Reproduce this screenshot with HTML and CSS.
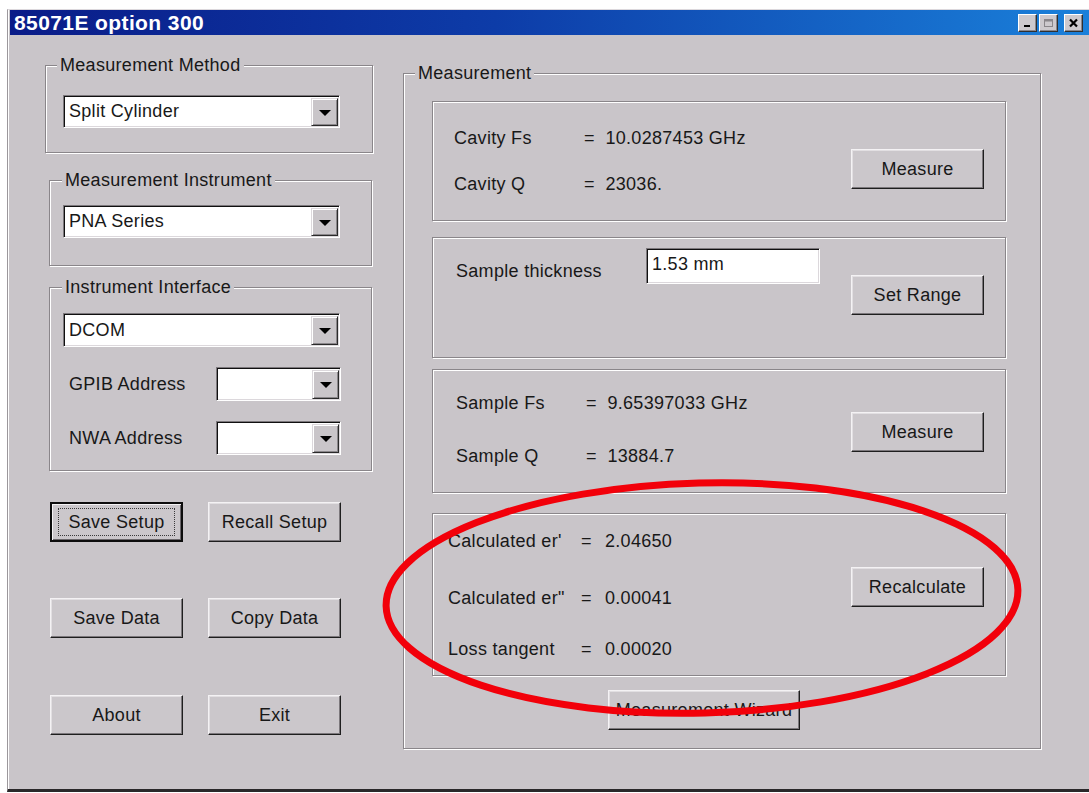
FILE: index.html
```html
<!DOCTYPE html>
<html lang="en">
<head>
<meta charset="utf-8">
<title>85071E option 300</title>
<link rel="stylesheet" href="styles.css">
</head>
<body>
<div class="window">
  <div class="titlebar">
    <span class="title">85071E option 300</span>
    <div class="caption-btns">
      <span class="cap-btn"><svg width="11" height="10" viewBox="0 0 11 10"><rect x="2" y="7" width="6" height="2" fill="#000"/></svg></span>
      <span class="cap-btn"><svg width="11" height="10" viewBox="0 0 11 10"><rect x="1.5" y="1.5" width="8" height="7" fill="none" stroke="#8a868a"/><rect x="2" y="2" width="7" height="1.5" fill="#8a868a"/></svg></span>
      <span class="cap-btn close"><svg width="11" height="10" viewBox="0 0 11 10"><path d="M2 1.5 L9 8.5 M9 1.5 L2 8.5" stroke="#000" stroke-width="2.2"/></svg></span>
    </div>
  </div>

  <div class="client">
    <div class="left-col">
      <div class="group g-method">
        <div class="group-title">Measurement Method</div>
        <div class="combo wide">
          <span class="combo-text">Split Cylinder</span>
          <span class="drop"><span class="arrow"></span></span>
        </div>
      </div>

      <div class="group g-instrument">
        <div class="group-title">Measurement Instrument</div>
        <div class="combo wide">
          <span class="combo-text">PNA Series</span>
          <span class="drop"><span class="arrow"></span></span>
        </div>
      </div>

      <div class="group g-interface">
        <div class="group-title">Instrument Interface</div>
        <div class="combo wide tall">
          <span class="combo-text">DCOM</span>
          <span class="drop"><span class="arrow"></span></span>
        </div>
        <div class="addr-row">
          <span class="addr-label">GPIB Address</span>
          <div class="combo small">
            <span class="combo-text"></span>
            <span class="drop"><span class="arrow"></span></span>
          </div>
        </div>
        <div class="addr-row">
          <span class="addr-label">NWA Address</span>
          <div class="combo small">
            <span class="combo-text"></span>
            <span class="drop"><span class="arrow"></span></span>
          </div>
        </div>
      </div>

      <div class="btn-row first">
        <button class="btn default"><span class="focus">Save Setup</span></button>
        <button class="btn">Recall Setup</button>
      </div>
      <div class="btn-row">
        <button class="btn">Save Data</button>
        <button class="btn">Copy Data</button>
      </div>
      <div class="btn-row">
        <button class="btn">About</button>
        <button class="btn">Exit</button>
      </div>
    </div>

    <div class="group g-measure">
      <div class="group-title">Measurement</div>

      <div class="panel p-cavity">
        <div class="readings">
          <span>Cavity Fs</span><span>= &nbsp;10.0287453 GHz</span>
          <span>Cavity Q</span><span>= &nbsp;23036.</span>
        </div>
        <button class="btn">Measure</button>
      </div>

      <div class="panel p-thickness">
        <div class="thickness">
          <span class="thick-label">Sample thickness</span>
          <div class="textbox">1.53 mm</div>
        </div>
        <button class="btn">Set Range</button>
      </div>

      <div class="panel p-sample">
        <div class="readings">
          <span>Sample Fs</span><span>= &nbsp;9.65397033 GHz</span>
          <span>Sample Q</span><span>= &nbsp;13884.7</span>
        </div>
        <button class="btn">Measure</button>
      </div>

      <div class="panel p-result">
        <div class="results">
          <span>Calculated er'</span><span>=</span><span>2.04650</span>
          <span>Calculated er"</span><span>=</span><span>0.00041</span>
          <span>Loss tangent</span><span>=</span><span>0.00020</span>
        </div>
        <button class="btn">Recalculate</button>
      </div>

      <button class="btn wizard">Measurement Wizard</button>
    </div>
  </div>
</div>

<svg class="markup" width="1089" height="793" viewBox="0 0 1089 793">
  <ellipse cx="702" cy="598" rx="316" ry="115" transform="rotate(-1.5 702 598)" fill="none" stroke="#f2000a" stroke-width="7"/>
</svg>
</body>
</html>
```

FILE: styles.css
```css
html, body {
  margin: 0;
  padding: 0;
  background: #ffffff;
  overflow: hidden;
}

body {
  width: 1089px;
  height: 793px;
  position: relative;
  font-family: "Liberation Sans", Arial, sans-serif;
  font-size: 18px;
  letter-spacing: 0.3px;
  color: #181818;
}

/* ---------- window frame ---------- */
.window {
  box-sizing: border-box;
  width: 1082px;
  margin: 9px 0 0 7px;
  border-left: 1px solid #9c989c;
  border-top: 1px solid #dcd8dc;
  border-bottom: 3px solid #2a282a;
  padding-left: 2px;
  box-shadow: inset 1px 0 #ffffff;
  background: #c9c5c9;
}

.titlebar {
  height: 25px;
  display: flex;
  align-items: center;
  justify-content: space-between;
  background: linear-gradient(to right, #0a1c88 0%, #0d3ca8 45%, #1a80da 100%);
  padding-left: 4px;
}

.title {
  color: #ffffff;
  font-weight: bold;
  font-size: 21px;
  letter-spacing: 0.4px;
  line-height: 25px;
}

.caption-btns {
  display: flex;
  align-items: center;
  margin-right: 6px;
  gap: 2px;
}

.cap-btn {
  box-sizing: border-box;
  width: 19px;
  height: 18px;
  background: #cdc9cd;
  border: 1px solid;
  border-color: #ffffff #303030 #303030 #ffffff;
  box-shadow: inset -1px -1px #8a868a;
  display: flex;
  align-items: center;
  justify-content: center;
}

.cap-btn.close {
  margin-left: 4px;
}

.client {
  height: 754px;
  display: flex;
  align-items: flex-start;
  padding: 30px 0 0 35px;
  box-sizing: border-box;
}

/* ---------- etched group boxes ---------- */
.group {
  box-sizing: border-box;
  border: 1px solid #8a868a;
  box-shadow: inset 1px 1px #ffffff, 1px 1px #ffffff;
}

.group-title {
  display: table;
  margin: -11px 0 0 12px;
  padding: 0 3px;
  line-height: 20px;
  background: #c9c5c9;
}

.left-col {
  width: 328px;
  display: flex;
  flex-direction: column;
}

.g-method {
  width: 328px;
  height: 88px;
  padding-left: 17px;
}
.g-method .group-title { margin-left: -6px; }
.g-method .combo { margin-top: 20px; }

.g-instrument {
  width: 323px;
  height: 86px;
  margin: 27px 0 0 4px;
  padding-left: 13px;
}
.g-instrument .group-title { margin-left: -1px; }
.g-instrument .combo { margin-top: 15px; }

.g-interface {
  width: 323px;
  height: 184px;
  margin: 21px 0 0 4px;
  padding-left: 13px;
}
.g-interface .group-title { margin-left: -1px; }
.g-interface .combo.wide { margin-top: 16px; }

/* ---------- combo boxes ---------- */
.combo {
  box-sizing: border-box;
  display: flex;
  background: #ffffff;
  border: 1px solid;
  border-color: #7c787c #ffffff #ffffff #7c787c;
  box-shadow: inset 1px 1px #101010, inset -1px -1px #dcd8dc;
}

.combo.wide {
  width: 277px;
  height: 33px;
}
.combo.wide.tall { height: 34px; }

.combo.small {
  width: 125px;
  height: 34px;
}

.combo-text {
  flex: 1;
  display: flex;
  align-items: center;
  padding-left: 5px;
}

.drop {
  box-sizing: border-box;
  width: 27px;
  margin: 2px 1px 1px 0;
  background: #c9c5c9;
  border: 1px solid;
  border-color: #dcd8dc #2a2a2a #2a2a2a #dcd8dc;
  box-shadow: inset 1px 1px #ffffff, inset -1px -1px #8a868a;
  display: flex;
  align-items: center;
  justify-content: center;
}

.arrow {
  width: 0;
  height: 0;
  border-left: 6px solid transparent;
  border-right: 6px solid transparent;
  border-top: 6px solid #000000;
  margin-top: 1px;
}

.addr-row {
  display: flex;
  align-items: center;
  margin-top: 20px;
}

.addr-label {
  width: 153px;
  padding-left: 6px;
  box-sizing: border-box;
  flex: none;
}

/* ---------- push buttons ---------- */
.btn {
  box-sizing: border-box;
  width: 133px;
  height: 40px;
  padding: 0;
  font: inherit;
  letter-spacing: inherit;
  color: inherit;
  background: #cbc7cb;
  border: 1px solid;
  border-color: #f4f2f4 #1e1e1e #1e1e1e #f4f2f4;
  box-shadow: inset -1px -1px #7c787c, inset 1px 1px #e2dfe2;
  display: flex;
  align-items: center;
  justify-content: center;
  flex: none;
}

.btn.default {
  border: 2px solid #0c0c0c;
  box-shadow: inset 1px 1px #f4f2f4, inset -1px -1px #6a666a;
}

.focus {
  box-sizing: border-box;
  width: 117px;
  height: 28px;
  border: 1px dotted #3a3a3a;
  display: flex;
  align-items: center;
  justify-content: center;
}

.btn-row {
  display: flex;
  gap: 25px;
  margin-left: 5px;
  margin-top: 56px;
}

.btn-row.first { margin-top: 31px; }
.btn-row:last-child { margin-top: 57px; }

/* ---------- measurement group ---------- */
.g-measure {
  width: 638px;
  height: 676px;
  margin: 8px 0 0 30px;
  padding-left: 28px;
}
.g-measure .group-title { margin-left: -17px; }

.panel {
  box-sizing: border-box;
  width: 574px;
  border: 1px solid #8a868a;
  box-shadow: inset 1px 1px #ffffff, 1px 1px #ffffff;
  display: flex;
  justify-content: space-between;
  align-items: flex-start;
  padding-right: 21px;
}

.p-cavity {
  height: 120px;
  margin-top: 18px;
  padding-left: 21px;
}
.p-cavity .readings { padding-top: 26px; row-gap: 26px; }
.p-cavity .btn { margin-top: 47px; }

.p-thickness {
  height: 121px;
  margin-top: 16px;
  padding-left: 23px;
}
.p-thickness .btn { margin-top: 37px; }

.p-sample {
  height: 124px;
  margin-top: 11px;
  padding-left: 23px;
}
.p-sample .readings { padding-top: 23px; row-gap: 33px; }
.p-sample .btn { margin-top: 42px; }

.p-result {
  height: 163px;
  margin-top: 20px;
  padding-left: 15px;
}
.p-result .btn { margin-top: 53px; }

.readings {
  display: grid;
  grid-template-columns: 130px auto;
  line-height: 20px;
}

.thickness {
  display: flex;
  align-items: flex-start;
}

.thick-label {
  width: 190px;
  margin-top: 23px;
  line-height: 20px;
}

.textbox {
  box-sizing: border-box;
  width: 174px;
  height: 36px;
  margin-top: 10px;
  padding: 4px 0 0 5px;
  background: #ffffff;
  border: 1px solid;
  border-color: #7c787c #ffffff #ffffff #7c787c;
  box-shadow: inset 1px 1px #101010, inset -1px -1px #dcd8dc;
  line-height: 22px;
}

.results {
  display: grid;
  grid-template-columns: 133px 24px auto;
  line-height: 20px;
  padding-top: 17px;
}
.results span:nth-child(n+4):nth-child(-n+6) { margin-top: 37px; }
.results span:nth-child(n+7) { margin-top: 31px; }

.wizard {
  width: 192px;
  margin: 14px 0 0 176px;
}

/* ---------- red annotation ring ---------- */
.markup {
  position: absolute;
  top: 0;
  left: 0;
  pointer-events: none;
}
```
